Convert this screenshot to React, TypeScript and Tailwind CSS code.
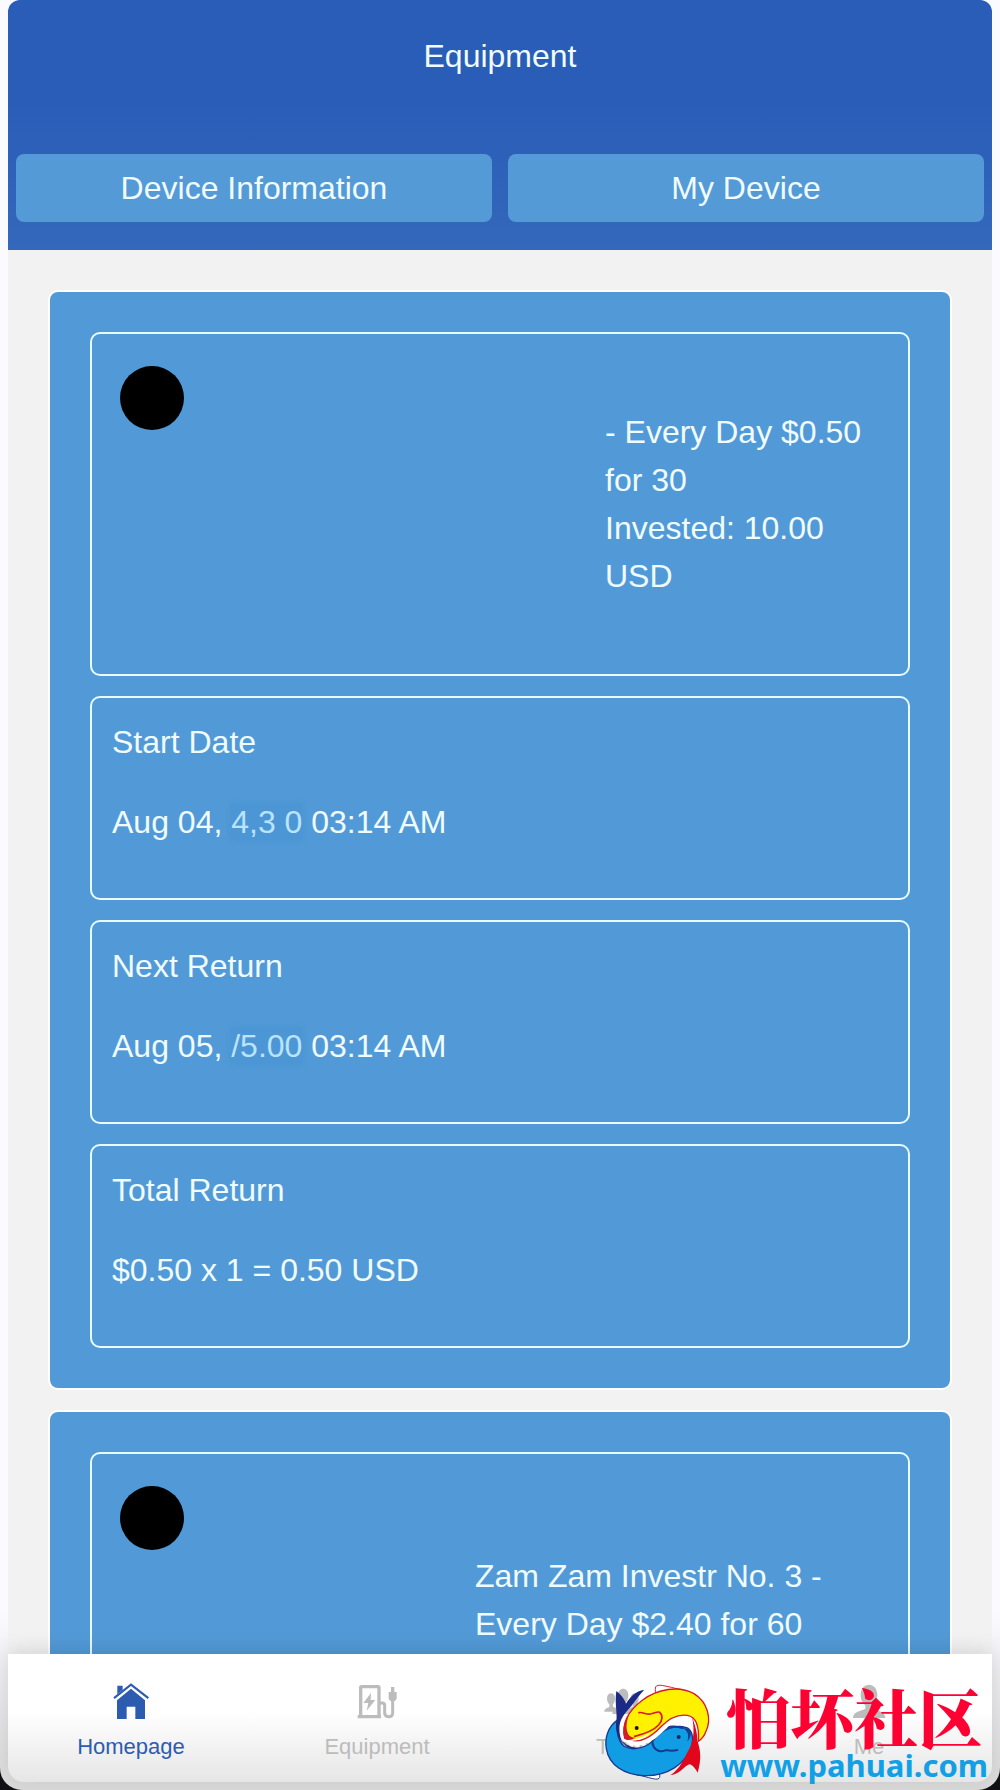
import type { ReactNode } from "react";

interface Row {
  title: string;
  value: ReactNode;
}

interface DeviceCardProps {
  lines: string[];
  textWidth: string;
  rows: Row[];
}

interface NavItemProps {
  label: string;
  icon: ReactNode;
  active?: boolean;
}

function Smudge({ text }: { text: string }) {
  return (
    <span className="bg-[#4d96d5] text-[#b9e4fb] shadow-[0_0_6px_2px_#4d96d5]">{text}</span>
  );
}

function InfoBox({ title, value }: Row) {
  return (
    <div className="rounded-[10px] border-2 border-[#e8fbff] p-5">
      <h2 className="mb-8">{title}</h2>
      <p className="mb-8">{value}</p>
    </div>
  );
}

function DeviceCard({ lines, textWidth, rows }: DeviceCardProps) {
  return (
    <article className="flex shrink-0 flex-col gap-5 rounded-[10px] border-2 border-white bg-[#529ad7] p-10">
      <div className="flex min-h-[344px] items-center justify-between rounded-[10px] border-2 border-[#e8fbff] px-7">
        <span className="mt-8 h-16 w-16 self-start rounded-full bg-black" />
        <div className={`min-h-36 ${textWidth}`}>
          {lines.map((line) => (
            <p key={line}>{line}</p>
          ))}
        </div>
      </div>
      {rows.map((row) => (
        <InfoBox key={row.title} title={row.title} value={row.value} />
      ))}
    </article>
  );
}

function HomeIcon() {
  return (
    <svg viewBox="156 64 114 114" className="h-[38px] w-[38px]" fill="currentColor">
      <path d="M172 75h16v12l-16 14z" />
      <path d="M160 110l53-42 54 42-4 5-50-39-49 39z" />
      <path d="M171 119l42-35 42 35v56h-29v-37h-26v37h-29z" />
    </svg>
  );
}

function ChargerIcon() {
  return (
    <svg viewBox="177 123 114 114" className="h-[38px] w-[38px] overflow-visible">
      <path d="M185 224v-84q0-3 3-3h49q3 0 3 3v84M176 227h70" fill="none" stroke="currentColor" strokeWidth="10" />
      <path d="M216 156l-23 30h15l-5 23 26-32h-14z" fill="currentColor" />
      <path d="M242 186h8q7 0 7 8v22q0 11 12 11t12-12v-42" fill="none" stroke="currentColor" strokeWidth="9" />
      <path d="M276 138h10v15h7v20q-3 8-12 8t-12-8v-20h7z" fill="currentColor" />
    </svg>
  );
}

function TeamIcon() {
  return (
    <svg viewBox="42 93 114 114" className="h-[38px] w-[38px]" fill="currentColor">
      <path d="M51 142c0-20 24-20 24 0 0 9-3 15-6 18v7l11 5-10 10H43c0-9 7-10 15-14v-8c-4-3-7-9-7-18z" />
      <path d="M122 142c0-20 24-20 24 0 0 9-3 15-6 18v8c8 4 15 5 15 14h-28l-10-10 11-5v-7c-4-3-6-9-6-18z" />
      <path d="M84 132c0-25 31-25 31 0 0 11-4 19-8 23v9c11 5 22 7 23 25H67c1-17 13-20 25-25v-9c-5-4-8-12-8-23z" />
    </svg>
  );
}

function PersonIcon() {
  return (
    <svg viewBox="420 63 114 114" className="h-[38px] w-[38px]" fill="currentColor">
      <path d="M452 101c0-40 50-40 50 0 0 16-6 26-13 32v10c17 8 36 8 37 28h-97c1-19 20-20 37-28v-10c-8-6-14-16-14-32z" />
    </svg>
  );
}

function NavItem({ label, icon, active }: NavItemProps) {
  return (
    <a
      href="#"
      className={`flex flex-1 flex-col items-center gap-3 pt-7 pb-5 text-[22px] leading-[30px] ${
        active ? "text-[#2c5cb0]" : "text-[#bcbcbc]"
      }`}
    >
      {icon}
      <span>{label}</span>
    </a>
  );
}

function FishLogo() {
  return (
    <svg viewBox="20 15 324 300" className="h-[100px] w-[108px] shrink-0" strokeLinejoin="round">
      {/* fins */}
      <path d="M174 59c4-13-7-32 9-34 12-2 43 8 70 13" fill="#fff" stroke="#e01a2c" strokeWidth="3" />
      <path d="M186 271c-5 15 9 31-5 35-15 2-36-9-63-12" fill="#fff" stroke="#1c3a93" strokeWidth="3" />
      {/* blue fish */}
      <path
        d="M62 128C30 150 22 185 27 215c8 50 53 78 113 81 70 2 125-34 143-91 7-25 0-50-18-54-30-8-70 4-92 34-23 27-63 37-88 25-20-10-31-45-23-82z"
        fill="#119de3"
        stroke="#173a91"
        strokeWidth="4"
      />
      <path
        d="M256 153c-24-9-54-5-74 10-18 14-21 34-12 48 10 14 27 14 36 8 12 3 20 4 34 0"
        fill="none"
        stroke="#183990"
        strokeWidth="6"
        strokeLinecap="round"
      />
      <path d="M255 153c26 0 34 18 15 41 6-20 2-33-15-41z" fill="#183990" />
      <circle cx="244" cy="180" r="6" fill="#142468" />
      {/* white channel between both bodies */}
      <path
        d="M301 196c5-45-4-71-32-76-28-4-58 13-78 36-27 28-60 46-92 38-14-8-22-30-20-58"
        fill="none"
        stroke="#fff"
        strokeWidth="20"
      />
      <path
        d="M57 42c12 9 24 23 29 38 12-20 29-38 55-42-14 15-26 31-39 49-18 21-35 38-36 66 0 20 4 36 14 50-14-12-25-34-24-62 6-29-5-61 1-99z"
        fill="#1b2a86"
      />
      <path d="M74 190c10 14 30 24 52 22-18 8-44 2-52-22z" fill="#1b2a86" />
      {/* yellow fish */}
      <path
        d="M82 184C72 140 95 100 135 70c45-35 110-45 155-20 40 25 55 75 35 115-5 15-15 23-22 28 3-43-4-73-33-78-28-4-58 12-80 35-26 28-62 50-90 38z"
        fill="#fff100"
        stroke="#d71929"
        strokeWidth="4"
      />
      <path d="M83 184c20 10 55-2 78-18-14 18-38 26-58 25-12 0-20-4-20-7z" fill="#fff" />
      <path
        d="M125 107c10-3 20 6 34 4 12-1 20-9 28-5 10 8 9 26-3 38-14 15-32 24-72 34"
        fill="none"
        stroke="#d71929"
        strokeWidth="5"
        strokeLinecap="round"
      />
      <path d="M96 112c-22 30-22 66-10 76 8 2 18 0 28-6-26 2-34-32-18-70z" fill="#d71929" />
      <circle cx="118" cy="153" r="6" fill="#1b1717" />
      <path
        d="M284 120c7 18 16 44 16 70 10 32 13 56 1 97-8-13-15-23-25-25-16 5-27 30-57 33 30-22 39-45 52-71 16-22 23-60 13-104z"
        fill="#e2061b"
      />
    </svg>
  );
}

function SiteBadge() {
  return (
    <div className="pointer-events-none absolute right-1 bottom-0 flex items-start gap-2">
      <FishLogo />
      <div className="flex flex-col items-center">
        <span className="font-['Noto_Serif_CJK_SC','Noto_Sans_CJK_SC',serif] text-[64px] leading-[66px] font-black text-[#ff0033]">
          怕坏社区
        </span>
        <span className="font-['Noto_Sans',sans-serif] text-[31px] leading-[34px] font-bold text-[#119fe6]">
          www.pahuai.com
        </span>
      </div>
    </div>
  );
}

const devices: DeviceCardProps[] = [
  {
    lines: ["- Every Day $0.50 for 30", "Invested: 10.00 USD"],
    textWidth: "w-[275px]",
    rows: [
      { title: "Start Date", value: <>Aug 04, <Smudge text="4,3 0" /> 03:14 AM</> },
      { title: "Next Return", value: <>Aug 05, <Smudge text="/5.00" /> 03:14 AM</> },
      { title: "Total Return", value: "$0.50 x 1 = 0.50 USD" },
    ],
  },
  {
    lines: ["Zam Zam Investr No. 3 - Every Day $2.40 for 60"],
    textWidth: "w-[405px]",
    rows: [],
  },
];

export default function App() {
  return (
    <div className="bg-[#101014] font-['Liberation_Sans',Arial,sans-serif] text-[32px] leading-[48px] text-[#f0fcff]">
      <div className="flex h-screen flex-col overflow-hidden rounded-b-[22px] bg-linear-to-b from-[#fafaff] from-90% to-[#d9d9d9] px-2 pb-2">
        <header className="shrink-0 rounded-t-xl bg-linear-to-b from-[#295db8] from-40% to-[#3468bb] px-2 pb-7">
          <h1 className="mb-[42px] py-8 text-center">Equipment</h1>
          <div className="flex gap-4">
            <button type="button" className="flex-1 rounded-lg bg-[#539ad7] py-[10px]">
              Device Information
            </button>
            <button type="button" className="flex-1 rounded-lg bg-[#539ad7] py-[10px]">
              My Device
            </button>
          </div>
        </header>

        <main className="flex min-h-0 flex-1 flex-col gap-5 overflow-hidden bg-[#f2f2f2] px-10 pt-10">
          {devices.map((device) => (
            <DeviceCard key={device.lines[0]} {...device} />
          ))}
        </main>

        <nav className="relative flex shrink-0 rounded-b-2xl bg-linear-to-b from-white from-45% to-[#e6e6e6] shadow-[0_-4px_20px_rgba(0,0,0,0.12)]">
          <NavItem label="Homepage" icon={<HomeIcon />} active />
          <NavItem label="Equipment" icon={<ChargerIcon />} />
          <NavItem label="Team" icon={<TeamIcon />} />
          <NavItem label="Me" icon={<PersonIcon />} />
          <SiteBadge />
        </nav>
      </div>
    </div>
  );
}
